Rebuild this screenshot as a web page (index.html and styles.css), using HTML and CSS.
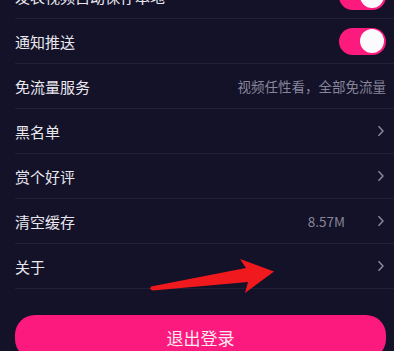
FILE: index.html
```
<!DOCTYPE html>
<html lang="zh-CN">
<head>
    <meta charset="UTF-8">
    <meta name="viewport" content="width=device-width, initial-scale=1.0">
    <title>设置</title>
    <link rel="stylesheet" href="styles.css">
</head>
<body>

<div class="settings">
    <div class="row">
        <span class="label">发表视频自动保存本地</span>
        <span class="switch on"><span class="knob"></span></span>
    </div>
    <div class="row">
        <span class="label">通知推送</span>
        <span class="switch on"><span class="knob"></span></span>
    </div>
    <div class="row">
        <span class="label">免流量服务</span>
        <span class="value">视频任性看，全部免流量</span>
    </div>
    <div class="row">
        <span class="label">黑名单</span>
        <svg class="chevron" width="8" height="12" viewBox="0 0 8 12"><path d="M1.5 1.2 L6 6 L1.5 10.8" fill="none" stroke="#8e8d9e" stroke-width="1.4"/></svg>
    </div>
    <div class="row">
        <span class="label">赏个好评</span>
        <svg class="chevron" width="8" height="12" viewBox="0 0 8 12"><path d="M1.5 1.2 L6 6 L1.5 10.8" fill="none" stroke="#8e8d9e" stroke-width="1.4"/></svg>
    </div>
    <div class="row">
        <span class="label">清空缓存</span>
        <span class="value">8.57M</span>
        <svg class="chevron" width="8" height="12" viewBox="0 0 8 12"><path d="M1.5 1.2 L6 6 L1.5 10.8" fill="none" stroke="#8e8d9e" stroke-width="1.4"/></svg>
    </div>
    <div class="row">
        <span class="label">关于</span>
        <svg class="chevron" width="8" height="12" viewBox="0 0 8 12"><path d="M1.5 1.2 L6 6 L1.5 10.8" fill="none" stroke="#8e8d9e" stroke-width="1.4"/></svg>
    </div>
</div>

<button class="logout">退出登录</button>

<svg class="arrow" width="394" height="351" viewBox="0 0 394 351">
    <polygon points="151,286.5 246,268 240,259 274,271.5 245,293 248,282 153,290.5 150,289" fill="#f01a1e"/>
</svg>

</body>
</html>
```

FILE: styles.css
```
body {
    margin: 0;
    background: #141228;
    font-family: "Noto Sans CJK SC", "Noto Sans", sans-serif;
    color: #e9e8ef;
    overflow: hidden;
    position: relative;
    height: 351px;
}
.settings {
    margin-top: -26px;
    padding-left: 15px;
}
.row {
    display: flex;
    align-items: center;
    height: 44px;
    padding-right: 8px;
    border-bottom: 1px solid #221f38;
}
.label {
    flex: 1;
    font-size: 15px;
}
.value {
    font-size: 13.5px;
    color: #86859a;
}
.chevron {
    display: block;
    margin-right: 1px;
}
.value + .chevron {
    margin-left: 32px;
}
.switch {
    width: 47px;
    height: 27px;
    border-radius: 14px;
    background: #fd1a7e;
    display: flex;
    align-items: center;
    justify-content: flex-end;
    padding: 0 2px;
    box-sizing: border-box;
}
.knob {
    width: 24px;
    height: 24px;
    border-radius: 50%;
    background: #fbfbfd;
}
.logout {
    display: block;
    margin: 26px 8px 0 15px;
    width: 371px;
    height: 44px;
    border: none;
    border-radius: 20px;
    background: #fd1a7e;
    color: #fbe8f0;
    font-family: "Noto Sans CJK SC", sans-serif;
    font-size: 17px;
    padding: 0;
}
.arrow {
    position: absolute;
    top: 0;
    left: 0;
    pointer-events: none;
}
```
